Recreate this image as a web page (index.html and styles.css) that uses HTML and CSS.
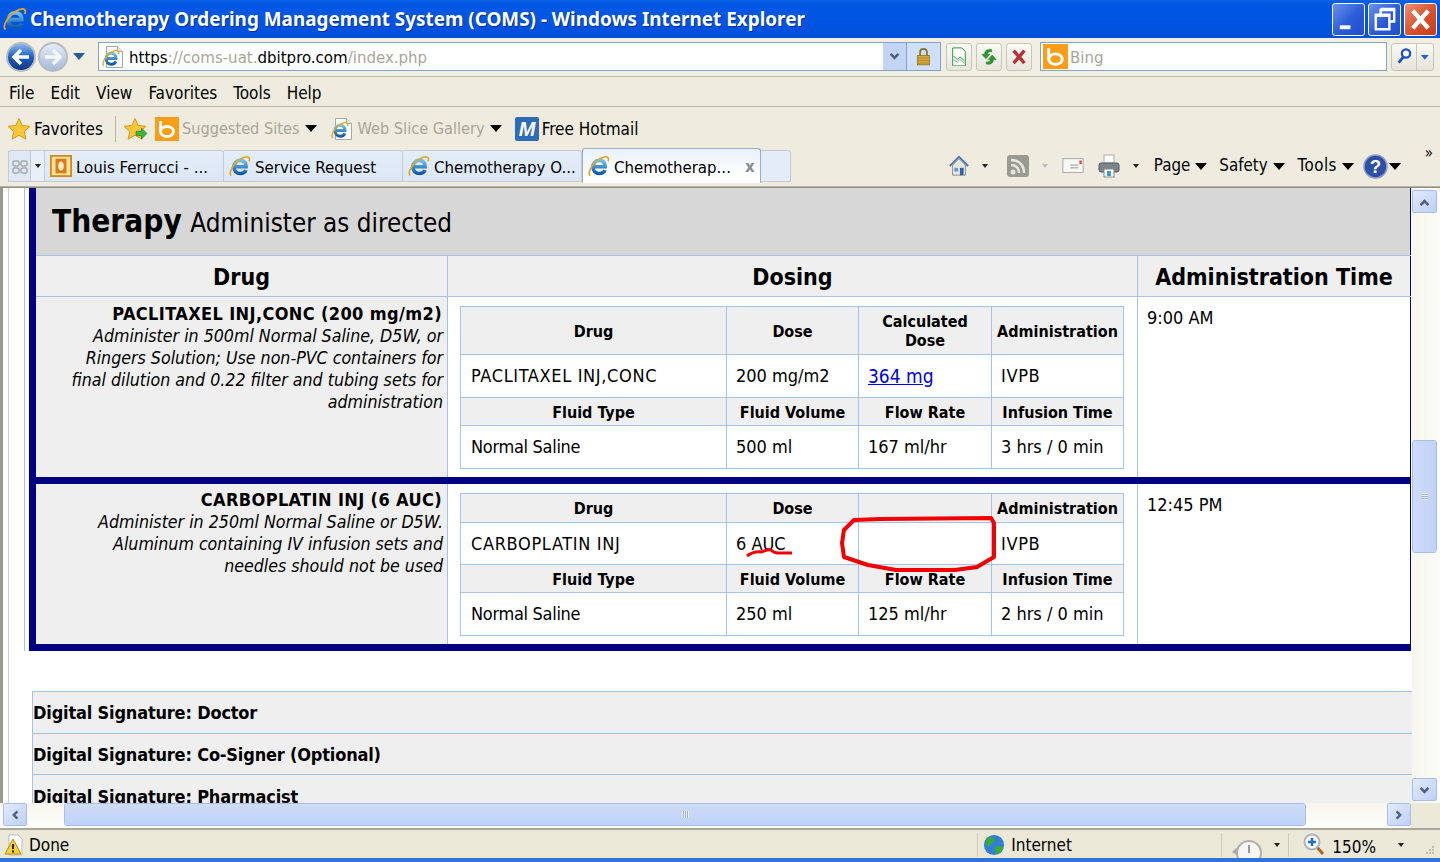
FILE: index.html
```html
<!DOCTYPE html>
<html lang="en">
<head>
<meta charset="utf-8">
<title>Chemotherapy Ordering Management System (COMS)</title>
<link rel="stylesheet" href="styles.css">
</head>
<body>
<svg class="defs" width="0" height="0" aria-hidden="true">
  <defs>
    <linearGradient id="blueball" x1="0" y1="0" x2="0" y2="1"><stop offset="0" stop-color="#8fc0f0"/><stop offset=".5" stop-color="#1c5fc0"/><stop offset="1" stop-color="#0c3580"/></linearGradient>
    <linearGradient id="greyball" x1="0" y1="0" x2="0" y2="1"><stop offset="0" stop-color="#e6edf7"/><stop offset="1" stop-color="#a6b9d8"/></linearGradient>
    <linearGradient id="iegrad" x1="0" y1="0" x2="0" y2="1"><stop offset="0" stop-color="#6fc0ee"/><stop offset="1" stop-color="#125ba8"/></linearGradient>
    <symbol id="ie" viewBox="0 0 24 24">
      <path d="M5.500 12.800h13.200c.3-4.300-2.600-7-6.300-7-4 0-7 3-7 7.200s3 7.200 7 7.200c3 0 5.200-1.400 6.200-3.700" fill="none" stroke="url(#iegrad)" stroke-width="4"/>
      <path d="M2.500 22.500C-1.500 19 6 6.500 16.500 2.500c4.500-1.700 7 .3 5.300 4.500" fill="none" stroke="#e8a51c" stroke-width="1.800"/>
    </symbol>
    <symbol id="bing" viewBox="0 0 24 24">
      <rect width="24" height="24" fill="#fb9d17"/>
      <path d="M5.500 4v11" stroke="#fff" stroke-width="2.800" fill="none"/>
      <ellipse cx="12" cy="14.500" rx="6.500" ry="5" fill="none" stroke="#fff" stroke-width="2.800"/>
    </symbol>
    <symbol id="star" viewBox="0 0 24 24">
      <path d="M12 1.500l3.200 7 7.800.8-5.800 5.200 1.700 7.700L12 18.200 5.100 22.200l1.700-7.700L1 9.300l7.800-.8z" fill="#fbc738" stroke="#d99a1c"/>
    </symbol>
    <symbol id="page" viewBox="0 0 24 24">
      <path d="M4.500 1.500h11l5 5v16h-16z" fill="#fff" stroke="#a8a8a8"/>
      <path d="M15.500 1.500v5h5" fill="#e8e8e8" stroke="#a8a8a8"/>
    </symbol>
  </defs>
</svg>

<div class="window">
  <header class="titlebar">
    <svg class="ico-title"><use href="#ie"/></svg>
    <span class="title-text">Chemotherapy Ordering Management System (COMS) - Windows Internet Explorer</span>
    <div class="winbtns">
      <div class="winbtn"><svg viewBox="0 0 32 32"><rect x="7" y="22" width="11" height="4" fill="#fff"/></svg></div>
      <div class="winbtn"><svg viewBox="0 0 32 32"><path d="M12 5h14v13h-4M12 5v5M7 11h14v15H7z" fill="none" stroke="#fff" stroke-width="2.500"/><path d="M12 6h14M7 12h14" stroke="#fff" stroke-width="3"/></svg></div>
      <div class="winbtn winbtn-close"><svg viewBox="0 0 32 32"><path d="M8 7l16 18M24 7L8 25" stroke="#fff" stroke-width="4.500"/></svg></div>
    </div>
  </header>

  <div class="addressrow">
    <svg class="navbtn" viewBox="0 0 30 30"><circle cx="15" cy="15" r="14" fill="url(#blueball)" stroke="#b7bcc4" stroke-width="2"/><path d="M23 15H9M15 8l-7 7 7 7" fill="none" stroke="#fff" stroke-width="3.500"/></svg>
    <svg class="navbtn" viewBox="0 0 30 30"><circle cx="15" cy="15" r="14" fill="url(#greyball)" stroke="#b7bcc4" stroke-width="2"/><path d="M7 15h14M15 8l7 7-7 7" fill="none" stroke="#f3f6fb" stroke-width="3.500"/></svg>
    <span class="navdrop"></span>
    <div class="addressbox">
      <span class="addr-icon"><svg class="ico-page"><use href="#page"/></svg><svg class="ico-page-e"><use href="#ie"/></svg></span>
      <span class="addr-url"><b>https</b>://coms-uat.<b>dbitpro.com</b>/index.php</span>
      <span class="addr-drop"><svg viewBox="0 0 10 10"><path d="M2 3l3 3 3-3" fill="none" stroke="#4d6185" stroke-width="2"/></svg></span>
      <span class="addr-lock"><svg viewBox="0 0 20 22"><path d="M6 10V6c0-5 8-5 8 0v4" fill="none" stroke="#8a6d20" stroke-width="2"/><rect x="3" y="10" width="14" height="11" fill="#d8a93a" stroke="#97701c"/><path d="M3 13h14M3 16h14M3 19h14" stroke="#b58a28"/></svg></span>
    </div>
    <div class="tool-sq"><svg viewBox="0 0 20 22"><path d="M3 1h10l4 4v16H3z" fill="#fff" stroke="#1d8a2e"/><path d="M4 10l4 4 3-3 5 4" fill="none" stroke="#1d8a2e"/><path d="M4 14l4 3 3-3 5 4" fill="none" stroke="#58a860"/></svg></div>
    <div class="tool-sq"><svg viewBox="0 0 20 22"><path d="M13 3c-5-1-8 1-8 5H2l4.500 5L11 8H8.500c0-2 1.500-3 4.500-2.500zM7 19c5 1 8-1 8-5h3l-4.500-5L9 14h2.500c0 2-1.500 3-4.500 2.500z" fill="#2b9a2b" stroke="#1a6d1a" stroke-width=".5"/></svg></div>
    <div class="tool-sq"><svg viewBox="0 0 20 22"><path d="M4 4l12 14M16 4L4 18" stroke="#b6333a" stroke-width="3.800"/></svg></div>
    <div class="searchbox">
      <svg class="ico-bing-lg"><use href="#bing"/></svg>
      <span class="search-text">Bing</span>
    </div>
    <div class="searchbtn">
      <span class="sb-left"><svg viewBox="0 0 20 20"><circle cx="12" cy="7" r="4.500" fill="#fff" stroke="#1f4fc0" stroke-width="2.500"/><path d="M9 11l-5 6" stroke="#1f4fc0" stroke-width="3"/></svg></span>
      <span class="sb-right"><svg viewBox="0 0 10 10"><path d="M1 3h8L5 8z" fill="#1f5fd0"/></svg></span>
    </div>
  </div>

  <nav class="menubar">
    <span>File</span><span>Edit</span><span>View</span><span>Favorites</span><span>Tools</span><span>Help</span>
  </nav>

  <div class="favbar">
    <svg class="ico-star"><use href="#star"/></svg>
    <span class="fav-label">Favorites</span>
    <span class="fav-sep"></span>
    <span class="addfav"><svg class="ico-star"><use href="#star"/></svg><svg class="addfav-arrow" viewBox="0 0 12 12"><path d="M1 4h5V1l5 5-5 5V8H1z" fill="#3fb53f" stroke="#1f7a1f" stroke-width=".6"/></svg></span>
    <svg class="ico-bing"><use href="#bing"/></svg>
    <span class="fav-grey">Suggested Sites</span><i class="caret caret-fav1"></i>
    <span class="addr-icon fav-ie"><svg class="ico-page"><use href="#page"/></svg><svg class="ico-page-e"><use href="#ie"/></svg></span>
    <span class="fav-grey">Web Slice Gallery</span><i class="caret caret-fav2"></i>
    <svg class="ico-msn" viewBox="0 0 24 24"><rect width="24" height="24" rx="2" fill="#2d6cb8"/><text class="msn-m" x="12" y="19">M</text></svg>
    <span class="fav-hotmail">Free Hotmail</span>
  </div>

  <div class="tabrow">
    <div class="tab-grid"><svg viewBox="0 0 16 16"><rect x="1" y="2" width="6" height="5" rx="1" fill="none" stroke="#8a8a8a"/><rect x="9" y="2" width="6" height="5" rx="1" fill="none" stroke="#8a8a8a"/><rect x="1" y="9" width="6" height="5" rx="1" fill="none" stroke="#8a8a8a"/><rect x="9" y="9" width="6" height="5" rx="1" fill="none" stroke="#8a8a8a"/></svg></div>
    <div class="tab-gridarrow"><i class="caret-sm"></i></div>
    <div class="tab">
      <svg class="ico-tab" viewBox="0 0 24 24"><rect x="1" y="1" width="22" height="22" fill="#fbe3a0" stroke="#d48a10" stroke-width="2"/><rect x="6" y="4" width="12" height="16" fill="#dd7a1a"/><ellipse cx="12" cy="12" rx="3" ry="5" fill="#fdf0c8"/></svg>
      <span class="tab-text">Louis Ferrucci - ...</span>
    </div>
    <div class="tab"><svg class="ico-tab"><use href="#ie"/></svg><span class="tab-text">Service Request</span></div>
    <div class="tab"><svg class="ico-tab"><use href="#ie"/></svg><span class="tab-text">Chemotherapy O...</span></div>
    <div class="tab tab-active"><svg class="ico-tab"><use href="#ie"/></svg><span class="tab-text">Chemotherap...</span><span class="tab-x">x</span></div>
    <div class="tab-new"></div>
    <div class="cmdbar">
      <svg class="cmd-home" viewBox="0 0 24 24"><path d="M2 12L12 2l10 10" fill="none" stroke="#4d76b8" stroke-width="2"/><path d="M5 11l7-7 7 7v11H5z" fill="#e7e7e2" stroke="#8a8a84"/><rect x="13" y="14" width="4" height="8" fill="#2e5fa8"/><rect x="7" y="14" width="4" height="4" fill="#6f92c8"/></svg>
      <i class="caret-sm cmd-c1"></i>
      <svg class="cmd-rss" viewBox="0 0 24 24"><rect x="1" y="1" width="22" height="22" rx="3" fill="#9a9a92"/><circle cx="7" cy="18" r="2.500" fill="#e6e6e0"/><path d="M5 11c5 0 8 3 8 8M5 6c8 0 13 5 13 13" fill="none" stroke="#e6e6e0" stroke-width="2.500"/></svg>
      <i class="caret-sm cmd-c2"></i>
      <svg class="cmd-mail" viewBox="0 0 24 20"><rect x="1" y="2" width="22" height="15" fill="#f8f8f6" stroke="#a5a5a0"/><path d="M9 9h9M9 12h9" stroke="#8f8f8a"/><rect x="19" y="4" width="2.500" height="4" fill="#d8473f"/></svg>
      <svg class="cmd-print" viewBox="0 0 24 24"><rect x="7" y="1" width="10" height="8" fill="#fff" stroke="#aaa"/><rect x="2" y="9" width="20" height="9" rx="2" fill="#7b838c" stroke="#555c64"/><rect x="7" y="15" width="10" height="8" fill="#fff" stroke="#888"/><rect x="10" y="17" width="4" height="5" fill="#3c9ac8"/></svg>
      <i class="caret-sm cmd-c3"></i>
      <span class="cmd-item">Page</span><i class="caret"></i>
      <span class="cmd-item cmd-safety">Safety</span><i class="caret"></i>
      <span class="cmd-item cmd-tools">Tools</span><i class="caret"></i>
      <svg class="cmd-help" viewBox="0 0 24 24"><circle cx="12" cy="12" r="11" fill="#2d4fa8" stroke="#8e9cc0" stroke-width="1.500"/><text class="help-q" x="12" y="18">?</text></svg>
      <i class="caret caret-help"></i>
      <span class="cmd-more">»</span>
    </div>
  </div>

  <div class="contentarea">
    <div class="viewport-row">
      <main class="viewport">
        <div class="inner-frame">
          <div class="therapy-frame">
            <table class="therapy">
              <colgroup><col class="c-drug"><col class="c-dosing"><col class="c-admin"></colgroup>
              <tr class="therapy-head"><td colspan="3"><span class="th-big">Therapy</span> <span class="th-sub">Administer as directed</span></td></tr>
              <tr class="col-head"><th>Drug</th><th>Dosing</th><th>Administration Time</th></tr>
              <tr class="drug-row row-a">
                <td class="drug-cell"><div class="drug-name">PACLITAXEL INJ,CONC (200 mg/m2)</div><div class="drug-note">Administer in 500ml Normal Saline, D5W, or Ringers Solution; Use non-PVC containers for final dilution and 0.22 filter and tubing sets for administration</div></td>
                <td class="dose-cell">
                  <table class="dose">
                    <colgroup><col class="d1"><col class="d2"><col class="d3"><col class="d4"></colgroup>
                    <tr class="h-tall"><th>Drug</th><th>Dose</th><th class="wrap">Calculated Dose</th><th>Administration</th></tr>
                    <tr class="r-val"><td class="caps">PACLITAXEL INJ,CONC</td><td>200 mg/m2</td><td class="calc"><a href="#">364 mg</a></td><td class="caps">IVPB</td></tr>
                    <tr class="h-short"><th>Fluid Type</th><th>Fluid Volume</th><th>Flow Rate</th><th>Infusion Time</th></tr>
                    <tr class="r-val"><td class="tight">Normal Saline</td><td>500 ml</td><td>167 ml/hr</td><td>3 hrs / 0 min</td></tr>
                  </table>
                </td>
                <td class="time-cell">9:00 AM</td>
              </tr>
              <tr class="drug-row row-b">
                <td class="drug-cell"><div class="drug-name">CARBOPLATIN INJ (6 AUC)</div><div class="drug-note">Administer in 250ml Normal Saline or D5W. Aluminum containing IV infusion sets and needles should not be used</div></td>
                <td class="dose-cell dose-cell-b">
                  <table class="dose">
                    <colgroup><col class="d1"><col class="d2"><col class="d3"><col class="d4"></colgroup>
                    <tr class="h-mid"><th>Drug</th><th>Dose</th><th></th><th>Administration</th></tr>
                    <tr class="r-val-short"><td class="caps">CARBOPLATIN INJ</td><td>6 AUC</td><td></td><td class="caps">IVPB</td></tr>
                    <tr class="h-short"><th>Fluid Type</th><th>Fluid Volume</th><th>Flow Rate</th><th>Infusion Time</th></tr>
                    <tr class="r-val"><td class="tight">Normal Saline</td><td>250 ml</td><td>125 ml/hr</td><td>2 hrs / 0 min</td></tr>
                  </table>
                </td>
                <td class="time-cell">12:45 PM</td>
              </tr>
            </table>
          </div>
          <div class="signatures">
            <div class="sig">Digital Signature: Doctor</div>
            <div class="sig">Digital Signature: Co-Signer (Optional)</div>
            <div class="sig">Digital Signature: Pharmacist</div>
          </div>
        </div>
        <svg class="annotation" viewBox="0 0 1411 615" width="1411" height="615">
          <path d="M854 332l26-1 111-1 3 5v34l-17 10-22 3h-59l-28-5-24-8-2-14 2-13z" fill="none" stroke="#f00000" stroke-width="4" stroke-linejoin="round"/>
          <path d="M747 368c4-3 9-5 14-4 4-1 7-3 10-2 3 3 6 3 7 3h14" fill="none" stroke="#f00000" stroke-width="3"/>
        </svg>
      </main>
      <aside class="vscroll">
        <div class="sb-btn"><svg viewBox="0 0 10 10"><path d="M2 7l3-3 3 3" fill="none" stroke="#4d6185" stroke-width="2"/></svg></div>
        <div class="vthumb"><span class="grip"></span></div>
        <div class="sb-btn sb-btn-end"><svg viewBox="0 0 10 10"><path d="M2 3l3 3 3-3" fill="none" stroke="#4d6185" stroke-width="2"/></svg></div>
      </aside>
    </div>
    <div class="hscroll">
      <div class="sb-btn-h"><svg viewBox="0 0 10 10"><path d="M7 2L4 5l3 3" fill="none" stroke="#4d6185" stroke-width="2"/></svg></div>
      <div class="hthumb"><span class="grip-h"></span></div>
      <div class="sb-btn-h sb-right-btn"><svg viewBox="0 0 10 10"><path d="M3 2l3 3-3 3" fill="none" stroke="#4d6185" stroke-width="2"/></svg></div>
    </div>
  </div>

  <footer class="statusbar">
    <span class="st-warn"><svg viewBox="0 0 20 22"><path d="M5 1h9l4 4v16H5z" fill="#fff" stroke="#bbb"/><path d="M9 5L1 20h16z" fill="#fbd130" stroke="#b58a10"/><path d="M9 10v5M9 16.500v2" stroke="#222" stroke-width="2"/></svg></span>
    <span class="st-done">Done</span>
    <span class="st-zone">
      <svg class="st-globe" viewBox="0 0 24 24"><circle cx="12" cy="12" r="11" fill="#2f7fd8"/><path d="M4 5c4-3 8-2 9 1s-4 3-5 6-3 2-5-1zM13 14c4-2 8-1 9 1-1 4-4 7-7 7-2-3-3-6-2-8z" fill="#3aa83a"/></svg>
      Internet
    </span>
    <span class="st-cell st-security"><svg viewBox="0 0 32 24"><path d="M1 14l9-8v14z" fill="#a8a8a8"/><circle cx="18" cy="15" r="12" fill="#f6f6f2" stroke="#b0b0ac" stroke-width="2"/><path d="M18 7v8" stroke="#999" stroke-width="2"/></svg><i class="caret-sm"></i></span>
    <span class="st-cell st-zoom"><svg viewBox="0 0 22 24"><path d="M13 13l7 8" stroke="#a5672a" stroke-width="3"/><circle cx="9" cy="9" r="7.500" fill="#fff" stroke="#a9b4c4" stroke-width="2"/><path d="M5 9h8M9 5v8" stroke="#1f6fd0" stroke-width="2.500"/></svg><span class="st-pct">150%</span><i class="caret-sm"></i></span>
    <svg class="st-grip" viewBox="0 0 12 12"><path d="M9 2h2v2H9zM6 5h2v2H6zM9 5h2v2H9zM3 8h2v2H3zM6 8h2v2H6zM9 8h2v2H9z" fill="#c2bfae"/></svg>
  </footer>
  <div class="taskedge"></div>
</div>
</body>
</html>
```

FILE: styles.css
```css
* { box-sizing: border-box; }
html, body { margin: 0; padding: 0; }
body { width: 1440px; height: 862px; overflow: hidden; background: #ece9d8; font-family: "DejaVu Sans Condensed", "DejaVu Sans", sans-serif; font-stretch: condensed; color: #000; }
.defs { position: absolute; }
svg { display: block; flex: none; }
.window { display: flex; flex-direction: column; height: 862px; }

/* title bar */
.titlebar { height: 38px; display: flex; align-items: center; padding: 0 3px 0 3px; background: linear-gradient(#0a62e6 0, #0258e2 4px, #0054e3 60%, #0050d8 100%); color: #fff; }
.ico-title { width: 24px; height: 26px; }
.title-text { margin-left: 3px; font: 700 18.900px "Noto Sans", sans-serif; text-shadow: 1px 1px 0 #0a2f90; white-space: nowrap; }
.winbtns { margin-left: auto; display: flex; gap: 3px; }
.winbtn { width: 33px; height: 33px; border: 1px solid #fff; border-radius: 3px; background: linear-gradient(135deg, #6a90ec, #2a5ad8 55%, #2450c8); }
.winbtn-close { background: linear-gradient(135deg, #ee9070, #d8502c 55%, #c43c1a); }

/* address row */
.addressrow { height: 39px; padding-bottom: 1px; display: flex; align-items: center; padding-left: 6px; background: #f1efe3; border-bottom: 1px solid #bdbbad; }
.navbtn { width: 30px; height: 30px; margin-right: 2px; }
.navdrop { width: 0; height: 0; margin: 0 13px 0 3px; border: 6px solid transparent; border-top: 7px solid #2a5a9c; border-bottom: 0; }
.addressbox { width: 843px; height: 29px; display: flex; align-items: center; background: #fff; border: 1px solid #85a3c4; }
.addr-icon { position: relative; width: 24px; height: 24px; display: block; flex: none; margin-left: 3px; }
.ico-page { width: 24px; height: 24px; }
.ico-page-e { position: absolute; left: 0; top: 4px; width: 18px; height: 18px; }
.addr-url { margin-left: 3px; padding-top: 1px; font-size: 16.700px; color: #a8a698; white-space: nowrap; }
.addr-url b { font-weight: 400; color: #000; }
.addr-drop { margin-left: auto; width: 23px; height: 27px; padding: 7px 5px; background: #c3d5f5; }
.addr-lock { width: 34px; height: 27px; padding: 4px 8px; background: #cfe0fa; border-left: 1px solid #85a3c4; }
.tool-sq { width: 26px; height: 28px; margin-left: 4px; padding: 3px; border: 1px solid #c7c6b8; border-radius: 3px; background: linear-gradient(#fafaf6, #e6e6dc); }
.addressbox + .tool-sq { margin-left: 5px; }
.searchbox { width: 347px; height: 29px; margin-left: 8px; display: flex; align-items: center; background: #fff; border: 1px solid #85a3c4; }
.ico-bing-lg { width: 25px; height: 25px; margin-left: 2px; }
.search-text { margin-left: 2px; font-size: 16.700px; color: #a8a698; }
.searchbtn { width: 43px; height: 28px; margin-left: 4px; display: flex; border: 1px solid #c7c6b8; border-radius: 3px; background: linear-gradient(#fafaf6, #e4e4da); }
.sb-left { width: 26px; padding: 3px; border-right: 1px solid #c7c6b8; }
.sb-right { width: 16px; padding: 8px 3px; }

/* menu */
.menubar { height: 30px; display: flex; align-items: center; gap: 16px; padding: 2px 0 0 9px; background: #efecdf; border-bottom: 1px solid #bdbbad; font-size: 17px; }

/* favourites */
.favbar { height: 39px; display: flex; align-items: center; padding: 4px 0 0 7px; background: #efecdf; font-size: 17px; white-space: nowrap; }
.ico-star { width: 24px; height: 26px; }
.fav-label { margin-left: 3px; }
.fav-sep { width: 1px; height: 26px; margin: 0 7px 0 12px; background: #b9b7a8; }
.addfav { position: relative; display: block; width: 24px; height: 26px; }
.addfav-arrow { position: absolute; right: -1px; bottom: 2px; width: 13px; height: 13px; }
.ico-bing { width: 24px; height: 24px; margin-left: 8px; }
.fav-grey { margin-left: 3px; font-size: 16.200px; color: #a8a698; }
.caret { display: block; flex: none; width: 0; height: 0; border: 6px solid transparent; border-top: 7px solid #000; border-bottom: 0; margin-left: 5px; }
.caret-fav1 { margin-right: 5px; }
.fav-ie { margin-left: 9px; }
.caret-fav2 { margin-right: 13px; }
.ico-msn { width: 24px; height: 24px; }
.msn-m { font: italic 700 20px "Liberation Sans", sans-serif; fill: #fff; text-anchor: middle; }
.fav-hotmail { margin-left: 3px; }

/* tab row */
.tabrow { height: 41px; display: flex; align-items: flex-end; padding: 0 0 4px 8px; background: #efecdf; border-bottom: 1px solid #b5b3a5; font-size: 16.700px; white-space: nowrap; position: relative; }
.tab-grid { width: 22px; height: 32px; padding: 8px 3px; background: #dfe9f6; border: 1px solid #c3cad4; border-right: 0; border-radius: 3px 0 0 0; }
.tab-grid svg { width: 16px; height: 16px; }
.tab-gridarrow { width: 15px; height: 32px; display: flex; align-items: center; justify-content: center; background: #e9eff8; border: 1px solid #c3cad4; }
.caret-sm { display: block; flex: none; width: 0; height: 0; border: 3px solid transparent; border-top: 4px solid #222; border-bottom: 0; }
.tab { width: 179px; height: 32px; display: flex; align-items: center; padding-left: 5px; background: linear-gradient(#e4edf9, #dce7f6); border: 1px solid #c3cad4; border-left: 0; border-radius: 0 3px 0 0; }
.ico-tab { width: 22px; height: 22px; }
.tab-text { margin-left: 4px; padding-top: 2px; }
.tab-active { height: 35px; margin-bottom: -1px; background: linear-gradient(#e8f1fb, #fff 80%); border: 1px solid #9fb0c6; border-bottom: 0; border-radius: 3px 3px 0 0; }
.tab-x { margin-left: 14px; font-weight: 700; color: #8c8c8c; }
.tab-new { width: 30px; height: 32px; background: #e3ecf8; border: 1px solid #c3cad4; border-left: 0; border-radius: 0 3px 0 0; }
.cmdbar { margin-left: auto; display: flex; align-items: center; height: 32px; padding-right: 39px; position: relative; font-size: 16.800px; }
.cmd-item { padding-bottom: 3px; }
.cmd-home { width: 22px; height: 24px; }
.cmd-c1 { margin: 0 18px 0 12px; }
.cmd-rss { width: 24px; height: 24px; }
.cmd-c2 { margin: 0 14px 0 12px; border-top-color: #bbb; }
.cmd-mail { width: 22px; height: 20px; }
.cmd-print { width: 24px; height: 26px; margin-left: 13px; }
.cmd-c3 { margin: 0 15px 0 12px; }
.cmd-safety { margin-left: 12px; }
.cmd-tools { margin-left: 13px; letter-spacing: .5px; }
.cmd-help { width: 25px; height: 25px; margin-left: 9px; }
.caret-help { margin-left: 1px; }
.help-q { font: 700 18px "Liberation Sans", sans-serif; fill: #fff; text-anchor: middle; }
.cmd-more { position: absolute; right: 7px; top: -6px; font-size: 15px; }

/* content */
.contentarea { height: 641px; display: flex; flex-direction: column; border-top: 1px solid #8f8e82; background: #ece9d8; }
.viewport-row { height: 615px; display: flex; }
.viewport { position: relative; width: 1412px; height: 615px; overflow: hidden; background: #fff; border-left: 3px solid #9a9a8c; }
.inner-frame { margin-left: 5px; border-left: 1px solid #cfcfcf; height: 100%; }
.therapy-frame { margin-left: 15px; padding-left: 4px; border-left: 1px solid #a4c2ea; width: 1403px; }
.therapy { width: 1382px; table-layout: fixed; border-collapse: collapse; border-left: 7px solid #000080; border-right: 1px solid #000080; }
.c-drug { width: 415px; }
.c-dosing { width: 690px; }
.therapy-head td { height: 67px; padding: 0 0 0 16px; background: #d7d7d7; border-bottom: 1px solid #a4c2ea; }
.th-big { font-size: 31.300px; font-weight: 700; }
.th-sub { font-size: 25.800px; margin-left: 4px; }
.col-head th { height: 41px; padding: 3px 0 0; background: #efefef; font-size: 23px; font-weight: 700; border-bottom: 1px solid #a4c2ea; }
.col-head th + th { border-left: 1px solid #a4c2ea; }
.drug-row > td { vertical-align: top; border-bottom: 7px solid #000080; }
.row-a > td { height: 184px; }
.row-b > td { height: 167px; }
.drug-cell { padding: 5px 4px 0 0; background: #efefef; text-align: right; }
.row-a .drug-cell { padding-top: 6px; }
.drug-name { font-size: 18px; font-weight: 700; padding-right: 1px; line-height: 22px; letter-spacing: .38px; }
.drug-note { padding-left: 26px; font-size: 17.650px; font-style: italic; line-height: 22px; }
.dose-cell { padding: 9px 13px 0 12px; border-left: 1px solid #a4c2ea; }
.time-cell { padding: 10px 0 0 9px; border-left: 1px solid #a4c2ea; font-size: 18px; line-height: 22px; }
.dose { width: 664px; table-layout: fixed; border-collapse: collapse; font-size: 18px; }
.d1 { width: 266px; }
.d2 { width: 132px; }
.d3 { width: 133px; }
.dose th, .dose td { border: 1px solid #a4c2ea; }
.dose th { padding: 1px 0 0; background: #efefef; font-size: 16px; font-weight: 700; line-height: 19px; }
.h-tall th, .h-short th { padding-top: 3px; }
.dose th.wrap { padding: 2px 20px 0; }
.dose td { padding: 0 0 0 10px; }
.dose td + td { padding-left: 9px; }
.dose td.caps { letter-spacing: .65px; }
.dose td.tight { letter-spacing: -.3px; }
.dose td.calc { font-size: 19px; }
.h-tall th { height: 48px; }
.h-mid th { height: 29px; }
.h-short th { height: 28px; }
.r-val td { height: 43px; }
.r-val-short td { height: 42px; }
.dose a { color: #0000e0; }
.signatures { margin-left: 23px; margin-top: 40px; border-left: 1px solid #a4c2ea; }
.sig { height: 42px; padding: 10px 0 0; background: #efefef; border-top: 1px solid #a4c2ea; font-size: 18px; font-weight: 700; line-height: 22px; letter-spacing: -.18px; }
.sig:nth-child(2) { height: 41px; }
.sig:nth-child(3) { padding-top: 11px; }
.annotation { position: absolute; left: -3px; top: 0; pointer-events: none; }

/* scrollbars */
.vscroll { width: 28px; height: 615px; padding: 2px 3px 2px 0; display: flex; flex-direction: column; background: linear-gradient(90deg, #f7f6ee, #fcfcf8); }
.sb-btn { width: 25px; height: 23px; padding: 5px; background: linear-gradient(135deg, #e2ebfd, #bdd0f6); border: 1px solid #fff; border-radius: 2px; outline: 1px solid #a9bde8; outline-offset: -1px; }
.sb-btn-end { margin-top: auto; }
.vthumb { width: 25px; height: 113px; margin-top: 227px; display: flex; align-items: center; justify-content: center; background: linear-gradient(90deg, #cfdcfa, #bfd2f7); border: 1px solid #fff; border-radius: 3px; outline: 1px solid #a9bde8; outline-offset: -1px; }
.grip { display: block; width: 7px; height: 7px; background: repeating-linear-gradient(#eef2fc 0 1px, #9db3de 1px 2px); }
.hscroll { height: 26px; display: flex; padding: 0 0 0 3px; width: 1411px; background: linear-gradient(#f7f6ee, #fdfdfa); }
.sb-btn-h { width: 24px; height: 23px; padding: 5px; background: linear-gradient(135deg, #e2ebfd, #bdd0f6); border: 1px solid #fff; border-radius: 2px; outline: 1px solid #a9bde8; outline-offset: -1px; }
.hthumb { width: 1242px; height: 23px; margin-left: 37px; display: flex; align-items: center; justify-content: center; background: linear-gradient(#cfdcfa, #bfd2f7); border: 1px solid #fff; border-radius: 3px; outline: 1px solid #a9bde8; outline-offset: -1px; }
.grip-h { display: block; width: 7px; height: 7px; background: repeating-linear-gradient(90deg, #eef2fc 0 1px, #9db3de 1px 2px); }
.sb-right-btn { margin-left: auto; }

/* status */
.statusbar { height: 30px; display: flex; align-items: center; padding: 2px 0 0 4px; border-top: 2px solid #a9a799; background: #ebe8d7; font-size: 17px; white-space: nowrap; overflow: hidden; }
.st-warn svg { width: 20px; height: 22px; }
.st-done { margin-left: 5px; }
.st-zone { display: flex; align-items: center; gap: 6px; margin-left: 908px; width: 244px; padding-left: 5px; border-left: 1px solid #cfccb9; height: 24px; }
.st-globe { width: 22px; height: 22px; }
.st-cell { display: flex; align-items: center; height: 24px; border-left: 1px solid #cfccb9; }
.st-security { width: 67px; padding-left: 9px; gap: 11px; }
.st-security svg { width: 32px; height: 24px; margin-top: 9px; }
.st-zoom { width: 130px; padding-left: 14px; }
.st-zoom svg { width: 22px; height: 24px; }
.st-pct { margin-left: 7px; margin-right: 22px; padding-top: 3px; }
.st-grip { width: 12px; height: 12px; margin: 10px 0 0 5px; }
.taskedge { height: 4px; background: #2f73d8; }
```
